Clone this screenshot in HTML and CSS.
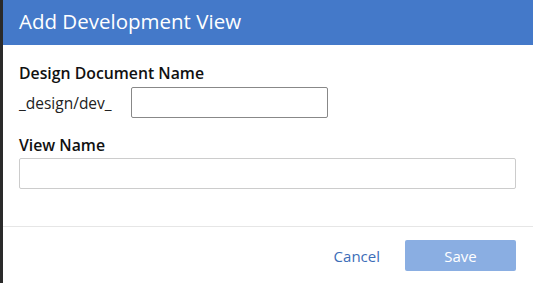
FILE: index.html
```html
<!DOCTYPE html>
<html>
<head>
<meta charset="utf-8">
<link rel="stylesheet" href="styles.css">
</head>
<body>
<div class="frame">
  <div class="edge"></div>
  <div class="dialog">
    <div class="header">Add Development View</div>
    <div class="body">
      <label class="label">Design Document Name</label>
      <div class="prefix-row">
        <span class="prefix">_design/dev_</span>
        <input class="input short" type="text">
      </div>
      <label class="label second">View Name</label>
      <input class="input wide" type="text">
    </div>
    <div class="footer">
      <button class="cancel">Cancel</button>
      <button class="save">Save</button>
    </div>
  </div>
</div>
</body>
</html>
```

FILE: styles.css
```css
html, body {
  margin: 0;
  padding: 0;
  background: #ffffff;
}
body {
  font-family: "Open Sans", "Noto Sans", sans-serif;
  width: 533px;
  height: 283px;
  overflow: hidden;
}
.frame {
  display: flex;
  height: 283px;
}
.edge {
  width: 3px;
  background: #2a2a2a;
  flex: none;
}
.dialog {
  flex: 1;
  display: flex;
  flex-direction: column;
}
.header {
  height: 45px;
  background: #4479c9;
  color: #ffffff;
  font-size: 20.5px;
  padding-left: 16px;
  box-sizing: border-box;
  padding-bottom: 3px;
  line-height: 42px;
}
.body {
  padding: 17px 16px 0 16px;
  height: 182px;
  box-sizing: border-box;
  border-bottom: 1px solid #e6e6e6;
  display: flex;
  flex-direction: column;
}
.label {
  font-size: 15.8px;
  font-weight: 600;
  color: #111111;
  line-height: 22px;
}
.second {
  margin-top: 16px;
}
.prefix-row {
  display: flex;
  align-items: center;
  margin-top: 3px;
}
.prefix {
  font-size: 15.5px;
  color: #222222;
  width: 112px;
}
.input {
  height: 31px;
  box-sizing: border-box;
  border: 1px solid #999999;
  border-radius: 2px;
  margin: 0;
  padding: 0;
  background: #fff;
  font-family: inherit;
}
.short {
  width: 197px;
  border-color: #888888;
}
.wide {
  width: 497px;
  margin-top: 2px;
  border-color: #cccccc;
}
.footer {
  display: flex;
  justify-content: flex-end;
  align-items: center;
  padding: 13px 17px 0 0;
  gap: 25px;
}
.cancel {
  background: none;
  border: none;
  color: #3c6db8;
  font-family: inherit;
  font-size: 15px;
  padding: 0;
}
.save {
  width: 111px;
  height: 31px;
  background: #8aaee2;
  border: none;
  border-radius: 2px;
  color: #ffffff;
  font-family: inherit;
  font-size: 15px;
}
```
